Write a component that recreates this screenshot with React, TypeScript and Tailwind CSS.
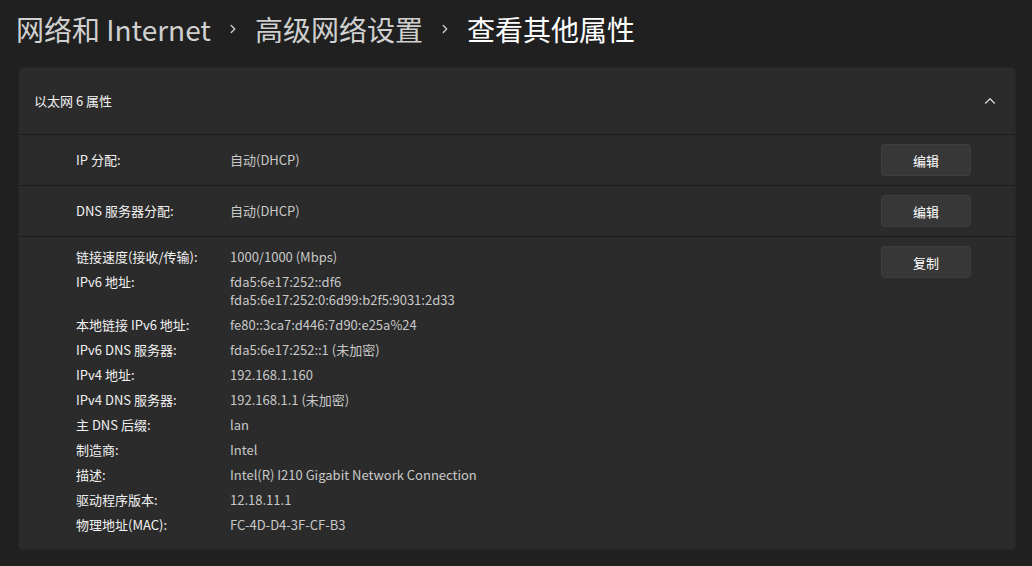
import { ChevronUp, ChevronRight } from "lucide-react"

const font = { fontFamily: '"Noto Sans CJK SC", "Noto Sans", sans-serif' }

interface Detail {
  label: string
  values: string[]
}

const details: Detail[] = [
  { label: "链接速度(接收/传输):", values: ["1000/1000 (Mbps)"] },
  { label: "IPv6 地址:", values: ["fda5:6e17:252::df6", "fda5:6e17:252:0:6d99:b2f5:9031:2d33"] },
  { label: "本地链接 IPv6 地址:", values: ["fe80::3ca7:d446:7d90:e25a%24"] },
  { label: "IPv6 DNS 服务器:", values: ["fda5:6e17:252::1 (未加密)"] },
  { label: "IPv4 地址:", values: ["192.168.1.160"] },
  { label: "IPv4 DNS 服务器:", values: ["192.168.1.1 (未加密)"] },
  { label: "主 DNS 后缀:", values: ["lan"] },
  { label: "制造商:", values: ["Intel"] },
  { label: "描述:", values: ["Intel(R) I210 Gigabit Network Connection"] },
  { label: "驱动程序版本:", values: ["12.18.11.1"] },
  { label: "物理地址(MAC):", values: ["FC-4D-D4-3F-CF-B3"] },
]

function ActionButton({ label }: { label: string }) {
  return (
    <button className="w-[90px] h-[32px] rounded-[4px] bg-[#373737] border border-[#3e3e3e] text-[13px] text-white leading-none">
      {label}
    </button>
  )
}

function SettingRow({ label, value, action }: { label: string; value: string; action: string }) {
  return (
    <div className="flex items-center h-[51px] border-t border-[#1d1d1d] pl-[57px] pr-[44px]">
      <div className="w-[154px] text-[13px] text-[#f2f2f2]">{label}</div>
      <div className="flex-1 text-[13px] text-[#c8c8c8]">{value}</div>
      <ActionButton label={action} />
    </div>
  )
}

export default function App() {
  return (
    <div className="w-[1032px] h-[566px] bg-[#202020] overflow-hidden" style={font}>
      <div className="flex items-center h-[58px] pl-[16px] text-[28px] leading-none">
        <span className="text-[#d0d0d0]">网络和 Internet</span>
        <ChevronRight className="w-[14px] h-[14px] mx-[15px] text-[#d0d0d0]" strokeWidth={2.2} />
        <span className="text-[#d0d0d0]">高级网络设置</span>
        <ChevronRight className="w-[14px] h-[14px] mx-[15px] text-[#d0d0d0]" strokeWidth={2.2} />
        <span className="text-white">查看其他属性</span>
      </div>

      <div className="mx-[18px] mt-[9px] w-[998px] rounded-[5px] bg-[#2b2b2b] border border-[#262626] overflow-hidden">
        <div className="flex items-center justify-between h-[66px] pl-[15px] pr-[16px]">
          <span className="text-[13px] text-[#f2f2f2] -mt-[1px]">以太网 6 属性</span>
          <ChevronUp className="w-[18px] h-[18px] text-[#e0e0e0]" strokeWidth={1.5} />
        </div>

        <SettingRow label="IP 分配:" value="自动(DHCP)" action="编辑" />
        <SettingRow label="DNS 服务器分配:" value="自动(DHCP)" action="编辑" />

        <div className="flex items-start border-t border-[#1d1d1d] pt-[9px] pb-[15px] pl-[57px] pr-[44px]">
          <div className="flex-1 flex flex-col gap-[7px] pt-[2px]">
            {details.map((d) => (
              <div key={d.label} className="flex text-[13px] leading-[18px]">
                <div className="w-[154px] text-[#f2f2f2]">{d.label}</div>
                <div className="flex flex-col text-[#c8c8c8]">
                  {d.values.map((v) => (
                    <span key={v}>{v}</span>
                  ))}
                </div>
              </div>
            ))}
          </div>
          <ActionButton label="复制" />
        </div>
      </div>
    </div>
  )
}
